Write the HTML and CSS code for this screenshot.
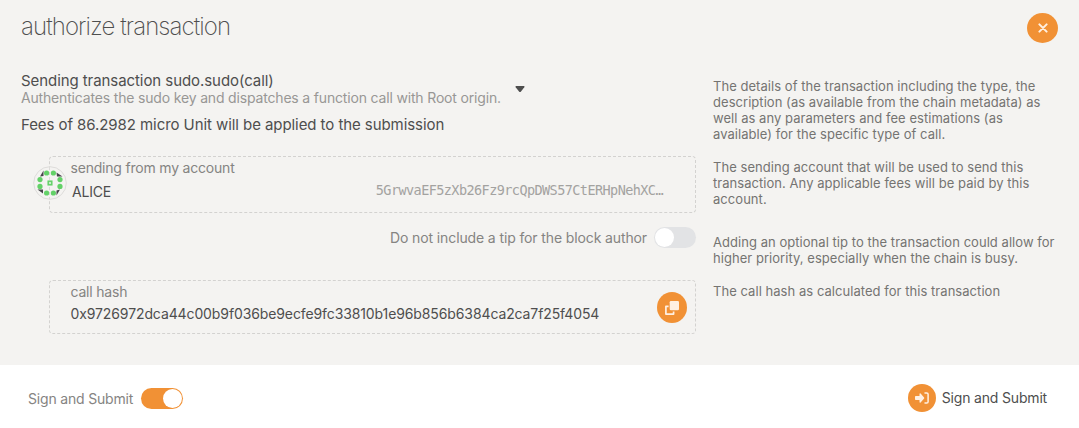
FILE: index.html
```html
<!DOCTYPE html>
<html lang="en">
<head>
<meta charset="utf-8">
<title>authorize transaction</title>
<link rel="stylesheet" href="styles.css">
</head>
<body>
<div class="modal">
  <header class="modal-header">
    <h1 class="title">authorize transaction</h1>
    <button class="round close" aria-label="close">
      <svg width="10" height="10" viewBox="0 0 10 10"><path d="M1.4 1.4 8.6 8.6M8.6 1.4 1.4 8.6" fill="none" stroke="#fff0e2" stroke-width="2" stroke-linecap="round"/></svg>
    </button>
  </header>
  <main class="content">
    <section class="form">
      <div class="call">
        <div>
          <div class="call-name">Sending transaction sudo.sudo(call)</div>
          <div class="call-desc">Authenticates the sudo key and dispatches a function call with Root origin.</div>
        </div>
        <svg class="caret" width="10" height="7" viewBox="0 0 10 7"><path d="M1 0H9Q10 .2 9.3 1.3L6 5.6Q5 6.6 4 5.6L.7 1.3Q0 .2 1 0Z" fill="#4e4e4e"/></svg>
      </div>
      <div class="fees">Fees of 86.2982 micro Unit will be applied to the submission</div>
      <div class="box account">
        <svg class="identicon" width="34" height="34" viewBox="0 0 34 34">
          <circle cx="17" cy="17" r="16.3" fill="#f4f3f1" stroke="#dddcda"/>
          <path d="M16.500 1V33" stroke="#dddcda" stroke-dasharray="3 2"/>
          <g fill="#46444a"><path d="M7 10.500 10.500 4.500V10Z"/><path d="M23.500 6.500 29.500 10.500H24Z"/><path d="M4.500 23.500H10V27.500Z"/><path d="M23.500 29.500V24.500L27 23.500Z"/></g>
          <g fill="#63d168"><circle cx="13.600" cy="7" r="2.600"/><circle cx="20.400" cy="7" r="2.600"/><circle cx="7" cy="13.600" r="2.600"/><circle cx="27" cy="13.600" r="2.600"/><circle cx="7" cy="20.400" r="2.600"/><circle cx="27" cy="20.400" r="2.600"/><circle cx="13.600" cy="27" r="2.600"/><circle cx="20.400" cy="27" r="2.600"/></g>
          <rect x="15.200" y="15.200" width="3.600" height="3.600" fill="#c9edc9" stroke="#63d168" stroke-width="1.500"/>
        </svg>
        <div class="label">sending from my account</div>
        <div class="account-row"><span class="account-name">ALICE</span><span class="address">5GrwvaEF5zXb26Fz9rcQpDWS57CtERHpNehXC…</span></div>
      </div>
      <div class="tip"><span class="tip-label">Do not include a tip for the block author</span><span class="toggle"></span></div>
      <div class="box hash">
        <div>
          <div class="label">call hash</div>
          <div class="hash-value">0x9726972dca44c00b9f036be9ecfe9fc33810b1e96b856b6384ca2ca7f25f4054</div>
        </div>
        <button class="round copy" aria-label="copy">
          <svg width="14" height="14" viewBox="0 0 14 14"><rect x="4.700" y="0" width="9.300" height="9.300" rx="1.200" fill="#fff0e2"/><path d="M3.600 5.400H.9V13.100H8.600V10.400" fill="none" stroke="#fff0e2" stroke-width="1.700" stroke-linejoin="round"/></svg>
        </button>
      </div>
    </section>
    <aside class="hints">
      <p class="hint">The details of the transaction including the type, the<br>description (as available from the chain metadata) as<br>well as any parameters and fee estimations (as<br>available) for the specific type of call.</p>
      <p class="hint hint-account">The sending account that will be used to send this<br>transaction. Any applicable fees will be paid by this<br>account.</p>
      <p class="hint">Adding an optional tip to the transaction could allow for<br>higher priority, especially when the chain is busy.</p>
      <p class="hint">The call hash as calculated for this transaction</p>
    </aside>
  </main>
  <footer class="footer">
    <div class="sign-mode"><span class="sign-label">Sign and Submit</span><span class="toggle on"></span></div>
    <button class="submit">
      <span class="round submit-icon"><svg width="14" height="12" viewBox="0 0 14 12"><path d="M.8 4H4.500V1.700Q4.800 1 5.600 1.500L9.100 5.400Q9.500 6 9.100 6.600L5.600 10.500Q4.800 11 4.500 10.300V8H.8Q0 8 0 7.200V4.800Q0 4 .8 4Z" fill="#fff0e2"/><path d="M10 .9H11.700Q13.100 .9 13.100 2.300V9.700Q13.100 11.100 11.700 11.100H10" fill="none" stroke="#fff0e2" stroke-width="1.500" stroke-linecap="round"/></svg></span>
      <span class="submit-label">Sign and Submit</span>
    </button>
  </footer>
</div>
</body>
</html>
```
FILE: styles.css
```css
* { box-sizing: border-box; }
body { margin: 0; background: #fff; font-family: Inter, "Liberation Sans", sans-serif; color: #4e4e4e; }
.modal { width: 1079px; height: 428px; display: flex; flex-direction: column; background: #f4f3f1; white-space: nowrap; }
.modal-header { height: 72px; display: flex; justify-content: space-between; align-items: flex-start; padding: 13px 21px 0; }
.title { margin: -2px 0 0; font-size: 24px; line-height: 32px; font-weight: 200; letter-spacing: -.9px; }
.round { display: flex; align-items: center; justify-content: center; border: 0; padding: 0; border-radius: 50%; background: #f19135; flex: none; }
.close { width: 31px; height: 30px; }
.content { height: 293px; display: flex; padding: 0 0 0 21px; }
.form { width: 675px; }
.call { display: flex; }
.call-name { font-size: 15px; line-height: 18px; letter-spacing: -.07px; }
.call-desc { font-size: 14px; line-height: 17px; letter-spacing: -.17px; color: #989795; width: 494px; margin-top: -1px; }
.caret { margin-top: 14px; }
.fees { margin-top: 10px; font-size: 15px; line-height: 18px; letter-spacing: -.07px; }
.box { margin-left: 28px; width: 647px; border: 1px dashed #d3d2d0; border-radius: 4px; padding-left: 20.5px; }
.account { position: relative; height: 57px; margin-top: 22px; padding-top: 2px; }
.identicon { position: absolute; left: -17px; top: 9px; }
.label { font-size: 14px; line-height: 18px; letter-spacing: -.2px; color: #858482; }
.account-row { display: flex; justify-content: space-between; align-items: center; height: 18px; padding: 0 32px 0 1.5px; margin-top: 6px; line-height: 18px; }
.account-name { font-size: 14px; letter-spacing: -.2px; }
.address { margin-top: -4px; font-family: "DejaVu Sans Mono", monospace; font-size: 13.5px; letter-spacing: -.57px; color: #a3a2a0; }
.tip { display: flex; justify-content: flex-end; align-items: center; height: 21px; margin-top: 14px; gap: 7px; }
.tip-label { font-size: 14px; letter-spacing: -.12px; color: #858482; }
.toggle { width: 42px; height: 21px; border-radius: 11px; background: #e2e3e5; padding: 1px; display: flex; }
.toggle::before { content: ""; width: 19px; height: 19px; border-radius: 50%; background: #fff; }
.toggle.on { background: #f19135; justify-content: flex-end; }
.hash { height: 54px; margin-top: 32px; display: flex; justify-content: space-between; padding-top: 2px; padding-right: 8px; }
.hash-value { font-size: 14px; line-height: 18px; letter-spacing: -.11px; margin-top: 4px; }
.copy { width: 30px; height: 31px; margin-top: 9px; }
.hints { padding: 6px 0 0 17px; }
.hint { margin: 0 0 17px; font-size: 13px; line-height: 16px; letter-spacing: .045px; color: #757472; }
.hint-account { margin-bottom: 27px; }
.footer { height: 63px; background: #fff; display: flex; justify-content: space-between; padding: 19px 32px 0 28px; }
.sign-mode { height: 29px; display: flex; align-items: center; gap: 8px; }
.sign-label { font-size: 14px; letter-spacing: -.18px; color: #858482; }
.submit { border: 0; padding: 0; background: none; height: 28px; display: flex; align-items: center; gap: 5.5px; font-family: inherit; color: #4e4e4e; }
.submit-icon { width: 28px; height: 28px; }
.submit-label { margin-top: -1px; font-size: 14px; letter-spacing: -.18px; }
```
